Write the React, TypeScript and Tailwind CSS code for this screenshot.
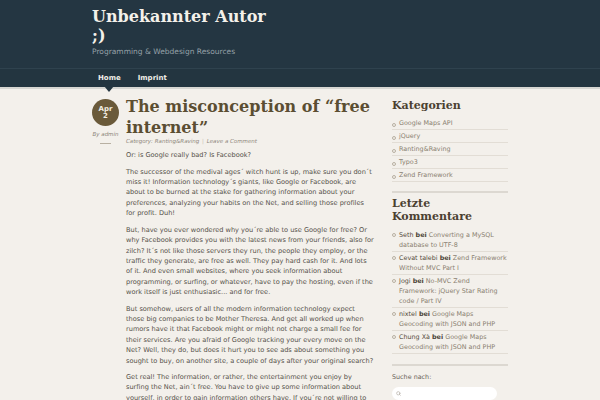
import { Search } from 'lucide-react'

const categories = ['Google Maps API', 'jQuery', 'Ranting&Raving', 'Typo3', 'Zend Framework']

const comments = [
  { who: 'Seth', post: 'Converting a MySQL database to UTF-8' },
  { who: 'Cevat talebi', post: 'Zend Framework Without MVC Part I' },
  { who: 'Jogi', post: 'No-MVC Zend Framework: jQuery Star Rating code / Part IV' },
  { who: 'nixtel', post: 'Google Maps Geocoding with JSON and PHP' },
  { who: 'Chung Xà', post: 'Google Maps Geocoding with JSON and PHP' },
]

const serif = 'font-["DejaVu_Serif",serif] font-bold'

const Bullet = () => (
  <span className="mt-[3px] mr-[3px] inline-block h-[4px] w-[4px] shrink-0 rounded-full border border-[#b8b0a2]" />
)

const App = () => {
  return (
    <div className="h-[400px] overflow-hidden bg-[#f3f0eb] font-['DejaVu_Sans',sans-serif]">
      {/* Header */}
      <div className="bg-[#243642]">
        <div className="mx-auto w-[416px] pt-[7px] pb-[11px]">
          <div className={`${serif} w-[178px] text-[16px] leading-[19px] text-[#f4f1ea]`}>Unbekannter Autor ;)</div>
          <div className="mt-[1px] text-[7.5px] text-[#95a1a8]">Programming &amp; Webdesign Resources</div>
        </div>
        <div className="border-t border-[#2f424e] bg-[#233540]">
          <div className="mx-auto flex h-[18px] w-[416px] items-center gap-[17px] pl-[6px] text-[7px] font-bold text-[#f1efe9]">
            <span className="relative">
              Home
              <span className="absolute left-1/2 top-[13px] -translate-x-1/2 border-x-[5px] border-t-[6px] border-x-transparent border-t-[#233540]" />
            </span>
            <span>Imprint</span>
          </div>
        </div>
      </div>
      <div className="h-[2px] bg-[#d6d6d2]" />

      <div className="mx-auto flex w-[416px] gap-[17px] pt-[8px]">
        {/* Post */}
        <div className="flex w-[283px] shrink-0">
          <div className="flex w-[34px] shrink-0 flex-col items-start">
            <div className="mt-[2px] flex h-[27px] w-[27px] flex-col items-center justify-center rounded-full bg-[#6a5a3a] text-[7px] font-bold leading-[7px] text-[#f4efe4]">
              <span>Apr</span>
              <span>2</span>
            </div>
            <div className="mt-[4px] w-[27px] text-center text-[5.5px] italic text-[#8a8478]">By admin</div>
            <div className="mx-[8px] mt-[4px] h-px w-[11px] bg-[#b8b0a2]" />
          </div>
          <div className="flex-1">
            <h1 className={`${serif} text-[16px] leading-[20.5px] text-[#5b4e32]`}>The misconception of “free internet”</h1>
            <div className="text-[5.5px] italic leading-[7px] text-[#8f887c]">
              Category: Ranting&amp;Raving <span className="mx-[1px] text-[#c8c0b2]">|</span> Leave a Comment
            </div>
            <div className="mt-[5px] space-y-[6px] text-[6.6px] leading-[10.4px] text-[#55504a]">
              <p>Or: is Google really bad? Is Facebook?</p>
              <p>
                The successor of the medival ages´ witch hunt is up, make sure you don´t miss it! Information
                technology´s giants, like Google or Facebook, are about to be burned at the stake for gathering
                information about your preferences, analyzing your habits on the Net, and selling those profiles for
                profit. Duh!
              </p>
              <p>
                But, have you ever wondered why you´re able to use Google for free? Or why Facebook provides you with
                the latest news from your friends, also for zilch? It´s not like those servers they run, the people
                they employ, or the traffic they generate, are free as well. They pay hard cash for it. And lots of
                it. And even small websites, where you seek information about programming, or surfing, or whatever,
                have to pay the hosting, even if the work itself is just enthusiasic... and for free.
              </p>
              <p>
                But somehow, users of all the modern information technology expect those big companies to be Mother
                Theresa. And get all worked up when rumors have it that Facebook might or might not charge a small fee
                for their services. Are you afraid of Google tracking your every move on the Net? Well, they do, but
                does it hurt you to see ads about something you sought to buy, on another site, a couple of days after
                your original search?
              </p>
              <p>
                Get real! The information, or rather, the entertainment you enjoy by surfing the Net, ain´t free. You
                have to give up some information about yourself, in order to gain information others have. If you´re
                not willing to
              </p>
            </div>
          </div>
        </div>

        {/* Sidebar */}
        <div className="w-[116px] shrink-0 pt-[2px]">
          <h2 className={`${serif} text-[11px] leading-[14px] text-[#4b4131]`}>Kategorien</h2>
          <ul className="mt-[4px]">
            {categories.map(c => (
              <li key={c} className="flex border-b border-[#e2ddd5] py-[2.5px] text-[6.4px] leading-[6.5px] text-[#8a8070]">
                <Bullet />
                <span>{c}</span>
              </li>
            ))}
          </ul>
          <div className="mt-[9px] h-[2px] bg-[#dcd8d1]" />
          <h2 className={`${serif} mt-[5px] text-[11px] leading-[12.5px] text-[#4b4131]`}>Letzte Kommentare</h2>
          <ul className="mt-[6px]">
            {comments.map((c, i) => (
              <li key={i} className="flex border-b border-[#e2ddd5] py-[1px] text-[6.4px] leading-[10px] text-[#8a8070]">
                <Bullet />
                <span className="max-w-[108px]">
                  <span className="text-[#564c3c]">{c.who}</span> <b className="text-[#4a4236]">bei</b> {c.post}
                </span>
              </li>
            ))}
          </ul>
          <div className="mt-[10px] h-[2px] bg-[#dcd8d1]" />
          <div className="mt-[7px] text-[6.4px] text-[#6a645a]">Suche nach:</div>
          <div className="mt-[4px] flex h-[13px] w-[105px] items-center rounded-full bg-white pl-[4px]">
            <Search className="h-[5px] w-[5px] text-[#b0aaa0]" strokeWidth={3} />
          </div>
        </div>
      </div>
    </div>
  )
}

export default App
